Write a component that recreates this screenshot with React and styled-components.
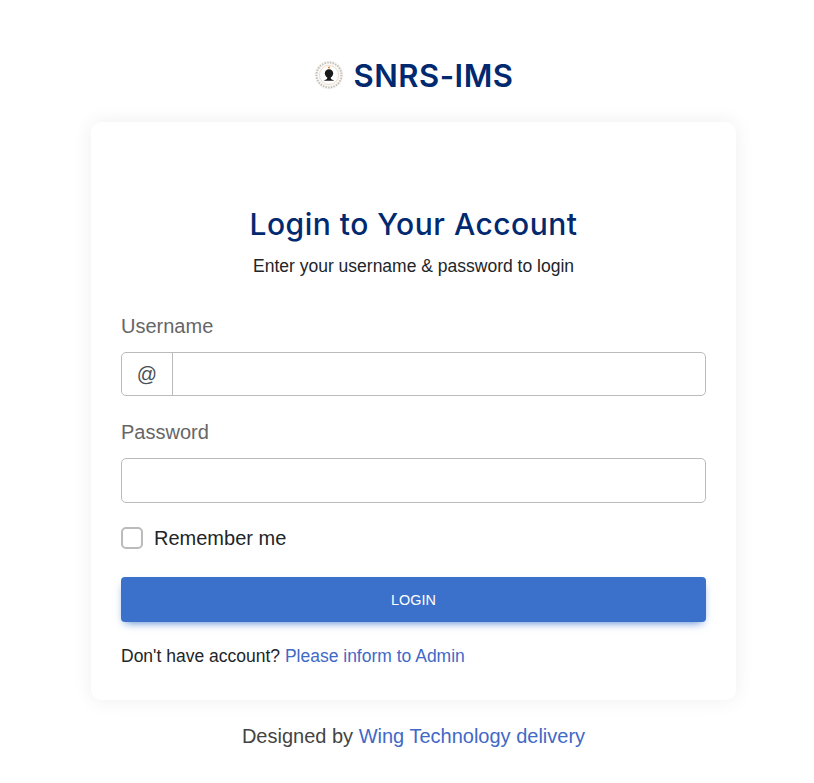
import styled, { createGlobalStyle } from 'styled-components'

const GlobalStyle = createGlobalStyle`
  body {
    margin: 0;
    background: #fff;
    font-family: "Liberation Sans", Arial, sans-serif;
    color: #212529;
  }
`

const Page = styled.main`
  width: 814px;
  height: 783px;
  padding: 56px 0 0 91px;
  box-sizing: border-box;
  overflow: hidden;
`

const Column = styled.div`
  width: 645px;
  display: flex;
  flex-direction: column;
`

const Brand = styled.a`
  display: flex;
  align-items: center;
  justify-content: center;
  gap: 10px;
  height: 38px;
  margin-bottom: 28px;
  color: #012970;
  text-decoration: none;
  font-family: Inter, sans-serif;
  font-size: 31px;
  font-weight: 600;
  letter-spacing: 0.5px;
`

const Card = styled.section`
  height: 578px;
  box-sizing: border-box;
  padding: 82px 30px 0;
  background: #fff;
  border-radius: 10px;
  box-shadow: 0 0 20px rgba(0, 0, 0, 0.07);
`

const Title = styled.h1`
  margin: 0;
  text-align: center;
  color: #012970;
  font-family: Inter, sans-serif;
  font-size: 30px;
  font-weight: 500;
  line-height: 40px;
  letter-spacing: 0.5px;
`

const Subtitle = styled.p`
  margin: 10px 0 0;
  text-align: center;
  font-size: 17.5px;
  line-height: 24px;
`

const Form = styled.form`
  display: flex;
  flex-direction: column;
  margin-top: 34px;
`

const Label = styled.label`
  display: block;
  margin-bottom: 11px;
  color: #666;
  font-size: 20px;
  line-height: 29px;
`

const Field = styled.div`
  margin-bottom: ${({ $gap }) => $gap}px;
`

const InputGroup = styled.div`
  display: flex;
  height: 44px;
  box-sizing: border-box;
  border: 1px solid #bbb;
  border-radius: 5px;
`

const Prefix = styled.span`
  width: 50px;
  display: flex;
  align-items: center;
  justify-content: center;
  border-right: 1px solid #bbb;
  color: #495057;
  font-size: 20px;
`

const Input = styled.input`
  flex: 1;
  min-width: 0;
  width: ${({ $bare }) => ($bare ? 'auto' : '100%')};
  height: ${({ $height }) => $height}px;
  box-sizing: border-box;
  padding: 0 12px;
  border: ${({ $bare }) => ($bare ? 'none' : '1px solid #bbb')};
  border-radius: 5px;
  outline: none;
  background: transparent;
  font-size: 16px;
`

const RememberRow = styled.label`
  display: flex;
  align-items: center;
  gap: 11px;
  height: 30px;
  margin-bottom: 24px;
  font-size: 20px;
`

const Checkbox = styled.input`
  appearance: none;
  width: 22px;
  height: 22px;
  margin: 0;
  background: #fff;
  border: 2px solid #bbb;
  border-radius: 5px;
`

const Button = styled.button`
  height: 45px;
  border: none;
  border-radius: 4px;
  background: #3b71ca;
  color: #fff;
  font-family: inherit;
  font-size: 14.4px;
  box-shadow: 0 4px 9px -4px #3b71ca;
`

const Hint = styled.p`
  margin: 22px 0 0;
  font-size: 17.5px;
  line-height: 24px;
`

const Link = styled.a`
  color: #4169c6;
  text-decoration: none;
`

const Credits = styled.p`
  margin: 21px 0 0;
  text-align: center;
  color: #444;
  font-size: 20px;
  line-height: 30px;
`

const Logo = () => (
  <svg width="30" height="30" viewBox="0 0 30 30" aria-hidden="true">
    <circle cx="15" cy="15" r="14.5" fill="#f9f8f6" />
    <circle cx="15" cy="15" r="12.5" fill="none" stroke="#c4c0b8" strokeWidth="2" strokeDasharray="1.5 1.2" />
    <circle cx="15" cy="15" r="9.5" fill="#fff" stroke="#e2c8ae" strokeWidth="0.6" />
    <circle cx="15" cy="13.5" r="4.2" fill="#1c1a18" />
    <path d="M13.6 16h2.8l.6 3 3.4 1.7H9.6l3.4-1.7z" fill="#1c1a18" />
    <circle cx="15" cy="7.6" r="1" fill="#d9822b" />
  </svg>
)

export default function App() {
  return (
    <Page>
      <GlobalStyle />
      <Column>
        <Brand href="#">
          <Logo />
          SNRS-IMS
        </Brand>
        <Card>
          <Title>Login to Your Account</Title>
          <Subtitle>Enter your username &amp; password to login</Subtitle>
          <Form onSubmit={(e) => e.preventDefault()}>
            <Field $gap={22}>
              <Label htmlFor="username">Username</Label>
              <InputGroup>
                <Prefix>@</Prefix>
                <Input id="username" $bare $height={42} />
              </InputGroup>
            </Field>
            <Field $gap={20}>
              <Label htmlFor="password">Password</Label>
              <Input id="password" type="password" $height={45} />
            </Field>
            <RememberRow>
              <Checkbox type="checkbox" />
              Remember me
            </RememberRow>
            <Button type="submit">LOGIN</Button>
            <Hint>
              Don't have account? <Link href="#">Please inform to Admin</Link>
            </Hint>
          </Form>
        </Card>
        <Credits>
          Designed by <Link href="#">Wing Technology delivery</Link>
        </Credits>
      </Column>
    </Page>
  )
}
